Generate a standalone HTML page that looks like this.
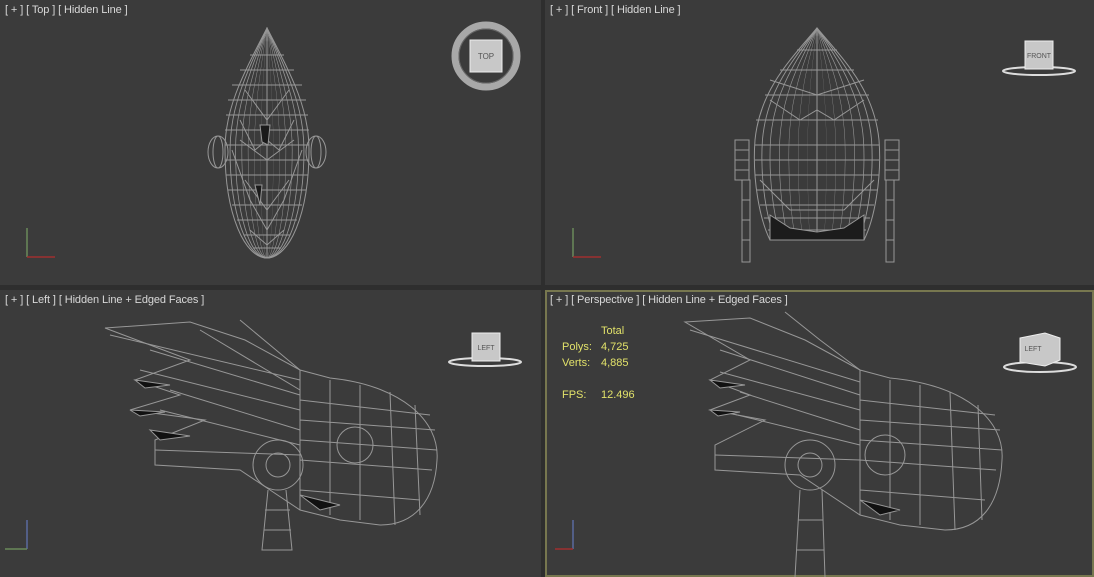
<!DOCTYPE html>
<html><head><meta charset="utf-8"><style>
html,body{margin:0;padding:0;background:#2e2e2e;width:1094px;height:577px;overflow:hidden}
.vp{position:absolute;background:#3b3b3b;overflow:hidden}
.lb{position:absolute;left:5px;top:4px;font:11px "Liberation Sans",sans-serif;color:#d8d8d8;white-space:nowrap;letter-spacing:-0.1px}
svg{position:absolute;left:0;top:0}
.st{position:absolute;font:11px "Liberation Sans",sans-serif;color:#e2e26a;line-height:16px}
</style></head><body>
<div class="vp" style="left:0;top:0;width:541px;height:285px"><div class="lb">[ + ] [ Top ] [ Hidden Line ]</div></div>
<div class="vp" style="left:545px;top:0;width:549px;height:285px"><div class="lb">[ + ] [ Front ] [ Hidden Line ]</div></div>
<div class="vp" style="left:0;top:290px;width:541px;height:287px"><div class="lb">[ + ] [ Left ] [ Hidden Line + Edged Faces ]</div></div>
<div class="vp" style="left:545px;top:290px;width:549px;height:287px;box-shadow:inset 0 0 0 2px #77774f"><div class="lb">[ + ] [ Perspective ] [ Hidden Line + Edged Faces ]</div>
<div class="st" style="left:17px;top:33px">&nbsp;<br>Polys:<br>Verts:<br><br>FPS:</div>
<div class="st" style="left:56px;top:33px">Total<br>4,725<br>4,885<br><br>12.496</div></div>

<svg width="1094" height="577" viewBox="0 0 1094 577" fill="none" stroke="#979797" stroke-width="1">
<defs>
<path id="tear" d="M267,28 C240,80 225,110 225,150 C225,215 245,258 267,258 C289,258 309,215 309,150 C309,110 294,80 267,28Z"/>
<path id="dome" d="M817,28 C790,60 760,90 755,140 C752,180 760,220 770,240 L864,240 C874,220 882,180 879,140 C874,90 844,60 817,28Z"/>
</defs>
<!-- Top view -->
<g>
<use href="#tear"/>
<use href="#tear" transform="translate(267 0) scale(0.88 1) translate(-267 0)"/>
<use href="#tear" transform="translate(267 0) scale(0.75 1) translate(-267 0)"/>
<use href="#tear" transform="translate(267 0) scale(0.6 1) translate(-267 0)"/>
<use href="#tear" transform="translate(267 0) scale(0.45 1) translate(-267 0)"/>
<use href="#tear" transform="translate(267 0) scale(0.3 1) translate(-267 0)"/>
<use href="#tear" transform="translate(267 0) scale(0.15 1) translate(-267 0)"/>
<line x1="267" y1="28" x2="267" y2="258"/>
<path d="M250,55 H284 M240,70 H294 M232,85 H302 M228,100 H306 M226,115 H308 M225,130 H309 M225,145 H309 M225,160 H309 M226,175 H308 M228,190 H306 M232,205 H302 M237,220 H297 M244,235 H290 M253,248 H281"/>
<path d="M245,90 L267,120 L289,90 M240,140 L267,160 L294,140 M245,180 L267,210 L289,180 M250,230 L267,245 L284,230 M232,150 L250,200 L267,230 L284,200 L302,150 M240,120 L255,150 L267,140 L279,150 L294,120"/>
<ellipse cx="218" cy="152" rx="10" ry="16"/><ellipse cx="218" cy="152" rx="5" ry="16"/>
<ellipse cx="316" cy="152" rx="10" ry="16"/><ellipse cx="316" cy="152" rx="5" ry="16"/>
<path d="M260,125 L270,125 L268,145 L262,142Z" fill="#1a1a1a"/>
<path d="M255,185 L262,185 L260,205Z" fill="#1a1a1a"/>
</g>
<!-- Front view -->
<g>
<use href="#dome"/>
<use href="#dome" transform="translate(817 0) scale(0.88 1) translate(-817 0)"/>
<use href="#dome" transform="translate(817 0) scale(0.75 1) translate(-817 0)"/>
<use href="#dome" transform="translate(817 0) scale(0.6 1) translate(-817 0)"/>
<use href="#dome" transform="translate(817 0) scale(0.45 1) translate(-817 0)"/>
<use href="#dome" transform="translate(817 0) scale(0.3 1) translate(-817 0)"/>
<use href="#dome" transform="translate(817 0) scale(0.15 1) translate(-817 0)"/>
<line x1="817" y1="28" x2="817" y2="240"/>
<path d="M797,50 H837 M780,70 H854 M765,95 H869 M756,120 H878 M755,145 H879 M755,160 H879 M755,175 H879 M757,190 H877 M760,205 H874 M764,218 H870 M768,230 H866"/>
<path d="M770,100 L800,120 L817,110 L834,120 L864,100 M760,180 L790,210 L844,210 L874,180 M770,80 L817,95 L864,80" />
<path d="M770,215 L790,228 L817,232 L844,228 L864,215 L864,240 L770,240Z" fill="#1c1c1c"/>
<rect x="735" y="140" width="14" height="40"/><rect x="885" y="140" width="14" height="40"/>
<path d="M735,150 H749 M735,160 H749 M735,170 H749 M885,150 H899 M885,160 H899 M885,170 H899"/>
<rect x="742" y="180" width="8" height="82"/><rect x="886" y="180" width="8" height="82"/>
<path d="M742,200 H750 M742,220 H750 M742,240 H750 M886,200 H894 M886,220 H894 M886,240 H894"/>
</g>
<!-- Left view -->
<g>
<path d="M105,328 L190,322 L245,340 L300,370 L330,378 C400,385 440,420 437,460 C435,500 415,525 380,525 L340,520 L300,510 L240,470 L155,465 L155,440 L205,420 L130,410 L180,395 L135,380 L190,360 Z"/>
<path d="M240,320 L270,345 L300,370" />
<path d="M150,350 L300,395 M140,370 L300,410 M170,390 L300,430 M160,410 L300,445 M155,450 L300,455 M110,335 L300,380 M200,330 L300,390"/>
<path d="M300,370 L300,510 M330,380 L330,515 M360,385 L360,520 M390,392 L395,525 M415,405 L420,515 M300,400 L430,415 M300,420 L435,430 M300,440 L437,450 M300,460 L432,470 M300,490 L420,500"/>
<circle cx="355" cy="445" r="18"/><circle cx="278" cy="465" r="25"/><circle cx="278" cy="465" r="12"/>
<path d="M268,490 L262,550 L292,550 L286,490 M265,510 H290 M264,530 H291" />
<path d="M135,380 L170,385 L145,388Z M130,410 L165,412 L140,416Z M150,430 L190,436 L160,440Z M300,495 L340,505 L320,510Z" fill="#111"/>
</g>
<!-- Perspective -->
<g transform="translate(560 0)">
<path d="M125,322 L190,318 L245,340 L300,370 L330,378 C405,385 445,420 442,460 C440,505 420,530 385,530 L340,525 L300,515 L240,475 L155,470 L155,445 L205,420 L150,410 L190,395 L150,380 L190,360 Z"/>
<path d="M225,312 L260,340 L300,370"/>
<path d="M160,350 L300,395 M160,372 L300,410 M180,392 L300,430 M165,412 L300,445 M155,455 L300,460 M130,330 L300,382"/>
<path d="M300,370 L300,515 M330,380 L330,520 M360,385 L360,525 M390,392 L395,530 M418,405 L422,520 M300,400 L435,415 M300,420 L440,430 M300,440 L442,450 M300,460 L436,470 M300,490 L425,500"/>
<circle cx="325" cy="455" r="20"/><circle cx="250" cy="465" r="25"/><circle cx="250" cy="465" r="12"/>
<path d="M240,490 L235,577 M262,490 L265,577 M238,520 H263 M237,550 H264"/>
<path d="M150,380 L185,385 L160,388Z M150,410 L180,412 L158,416Z M300,500 L340,510 L320,515Z" fill="#111"/>
</g>
<!-- ViewCubes -->
<g>
<circle cx="486" cy="56" r="31" stroke="#a8a8a8" stroke-width="7"/>
<circle cx="486" cy="56" r="27" stroke="#666" stroke-width="1"/>
<rect x="470" y="40" width="32" height="32" fill="#c8c8c8" stroke="#eee"/>
<text x="486" y="59" font-family="Liberation Sans" font-size="8" fill="#555" stroke="none" text-anchor="middle">TOP</text>
<ellipse cx="1039" cy="71" rx="36" ry="4" stroke="#ddd" stroke-width="2"/>
<rect x="1025" y="41" width="28" height="28" fill="#c8c8c8" stroke="#eee"/>
<text x="1039" y="58" font-family="Liberation Sans" font-size="7" fill="#555" stroke="none" text-anchor="middle">FRONT</text>
<ellipse cx="485" cy="362" rx="36" ry="4" stroke="#ddd" stroke-width="2"/>
<rect x="472" y="333" width="28" height="28" fill="#c8c8c8" stroke="#eee"/>
<text x="486" y="350" font-family="Liberation Sans" font-size="7" fill="#555" stroke="none" text-anchor="middle">LEFT</text>
<ellipse cx="1040" cy="367" rx="36" ry="5" stroke="#ddd" stroke-width="2"/>
<path d="M1020,338 L1045,333 L1060,338 L1060,360 L1045,366 L1020,362Z" fill="#c8c8c8" stroke="#eee"/>
<text x="1033" y="351" font-family="Liberation Sans" font-size="7" fill="#555" stroke="none" text-anchor="middle">LEFT</text>
</g>
<!-- axes -->
<g stroke-width="1.5">
<path d="M27,257 V228" stroke="#6a8a5a"/><path d="M27,257 H55" stroke="#a03030"/>
<path d="M573,257 V228" stroke="#6a8a5a"/><path d="M573,257 H601" stroke="#a03030"/>
<path d="M27,549 V520" stroke="#5a6aa0"/><path d="M27,549 H5" stroke="#6a8a5a"/>
<path d="M573,549 V520" stroke="#5a6aa0"/><path d="M573,549 H555" stroke="#a03030"/>
</g>
</svg>
</body></html>
